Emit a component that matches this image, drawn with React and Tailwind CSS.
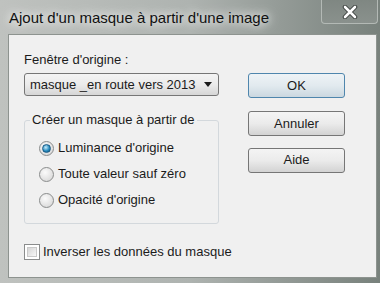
const Radio = ({ checked, label }) => (
    <div className="flex items-center h-[26px]">
        <div className="w-[15px] h-[15px] rounded-full border border-[#8a8c8c] bg-[radial-gradient(circle_at_40%_35%,#fbfbfb,#d2d2d2)] flex items-center justify-center">
            {checked && (
                <div className="w-[9px] h-[9px] rounded-full bg-[radial-gradient(circle_at_40%_35%,#c9ecfb,#2a8dc0_55%,#0b4f78)] border border-[#1b5c86]" />
            )}
        </div>
        <span className="ml-[4px] text-[13px] leading-[16px] text-[#1b1b1b] whitespace-nowrap">{label}</span>
    </div>
);

const Button = ({ children, primary }) => (
    <button
        className={
            primary
                ? "w-[97px] h-[25px] rounded-[3px] border border-[#4f86ad] bg-gradient-to-b from-[#eef3f6] via-[#e2eaef] to-[#cbd8e0] text-[13px] text-[#1b1b1b]"
                : "w-[97px] h-[25px] rounded-[3px] border border-[#767676] bg-gradient-to-b from-[#f4f4f4] via-[#ebebeb] to-[#d3d3d3] text-[13px] text-[#1b1b1b]"
        }
    >
        {children}
    </button>
);

export default function App() {
    return (
        <div className="w-[380px] h-[283px] flex flex-col bg-gradient-to-r from-[#bfc2bf] via-[#aeb3b0] to-[#78817c] font-['Liberation_Sans',Arial,sans-serif]">
            {/* Title bar */}
            <div className="h-[34px] flex items-start justify-between">
                <div className="pl-[9px] pt-[9px] text-[15px] leading-[18px] text-[#111] whitespace-nowrap [text-shadow:0_0_8px_#ffffff,0_0_14px_#ffffff]">
                    Ajout d'un masque à partir d'une image
                </div>
                <div className="mr-[2px] w-[57px] h-[24px] rounded-b-[4px] border border-t-0 border-[#b3b9b5] bg-gradient-to-b from-[#7f8782] to-[#8a918d] flex items-center justify-center">
                    <svg width="16" height="14" viewBox="0 0 16 14">
                        <path d="M3 2 L13 12 M13 2 L3 12" stroke="#3a3f3c" strokeWidth="4.5" strokeLinecap="round" />
                        <path d="M3 2 L13 12 M13 2 L3 12" stroke="#ffffff" strokeWidth="2.6" strokeLinecap="round" />
                    </svg>
                </div>
            </div>

            {/* Client area */}
            <div className="ml-[8px] mr-[3px] mb-[5px] flex-1 flex bg-[#f0f0f0] border border-[#8d938f] text-[#1b1b1b]">
                <div className="pl-[15px] pt-[17px] w-[211px]">
                    <div className="text-[13px] leading-[16px]">Fenêtre d'origine :</div>
                    <div className="mt-[5px] w-[195px] h-[23px] rounded-[3px] border border-[#767676] bg-gradient-to-b from-[#f4f4f4] via-[#ebebeb] to-[#d6d6d6] flex items-center justify-between pl-[5px] pr-[6px]">
                        <span className="text-[13px] leading-[16px] whitespace-nowrap">masque _en route vers 2013</span>
                        <svg width="8" height="5" viewBox="0 0 8 5">
                            <path d="M0 0 H8 L4 5 Z" fill="#1b1b1b" />
                        </svg>
                    </div>

                    <fieldset className="mt-[16px] w-[195px] border border-[#d3d8dc] rounded-[3px] pl-[5px] pb-[10px]">
                        <legend className="px-[2px] text-[13px] leading-[16px]">Créer un masque à partir de</legend>
                        <div className="ml-[9px] mt-[7px]">
                            <Radio checked label="Luminance d'origine" />
                            <Radio label="Toute valeur sauf zéro" />
                            <Radio label="Opacité d'origine" />
                        </div>
                    </fieldset>

                    <div className="mt-[20px] flex items-center">
                        <div className="w-[16px] h-[16px] shrink-0 border border-[#8a8c8c] bg-white p-[2px]">
                            <div className="w-full h-full bg-gradient-to-br from-[#d6d6d6] to-[#f7f7f7] border border-[#c9c9c9]" />
                        </div>
                        <span className="ml-[3px] text-[13px] leading-[16px] whitespace-nowrap">Inverser les données du masque</span>
                    </div>
                </div>

                <div className="ml-[28px] pt-[38px] flex flex-col">
                    <Button primary>OK</Button>
                    <div className="mt-[13px]">
                        <Button>Annuler</Button>
                    </div>
                    <div className="mt-[11px]">
                        <Button>Aide</Button>
                    </div>
                </div>
            </div>
        </div>
    );
}
